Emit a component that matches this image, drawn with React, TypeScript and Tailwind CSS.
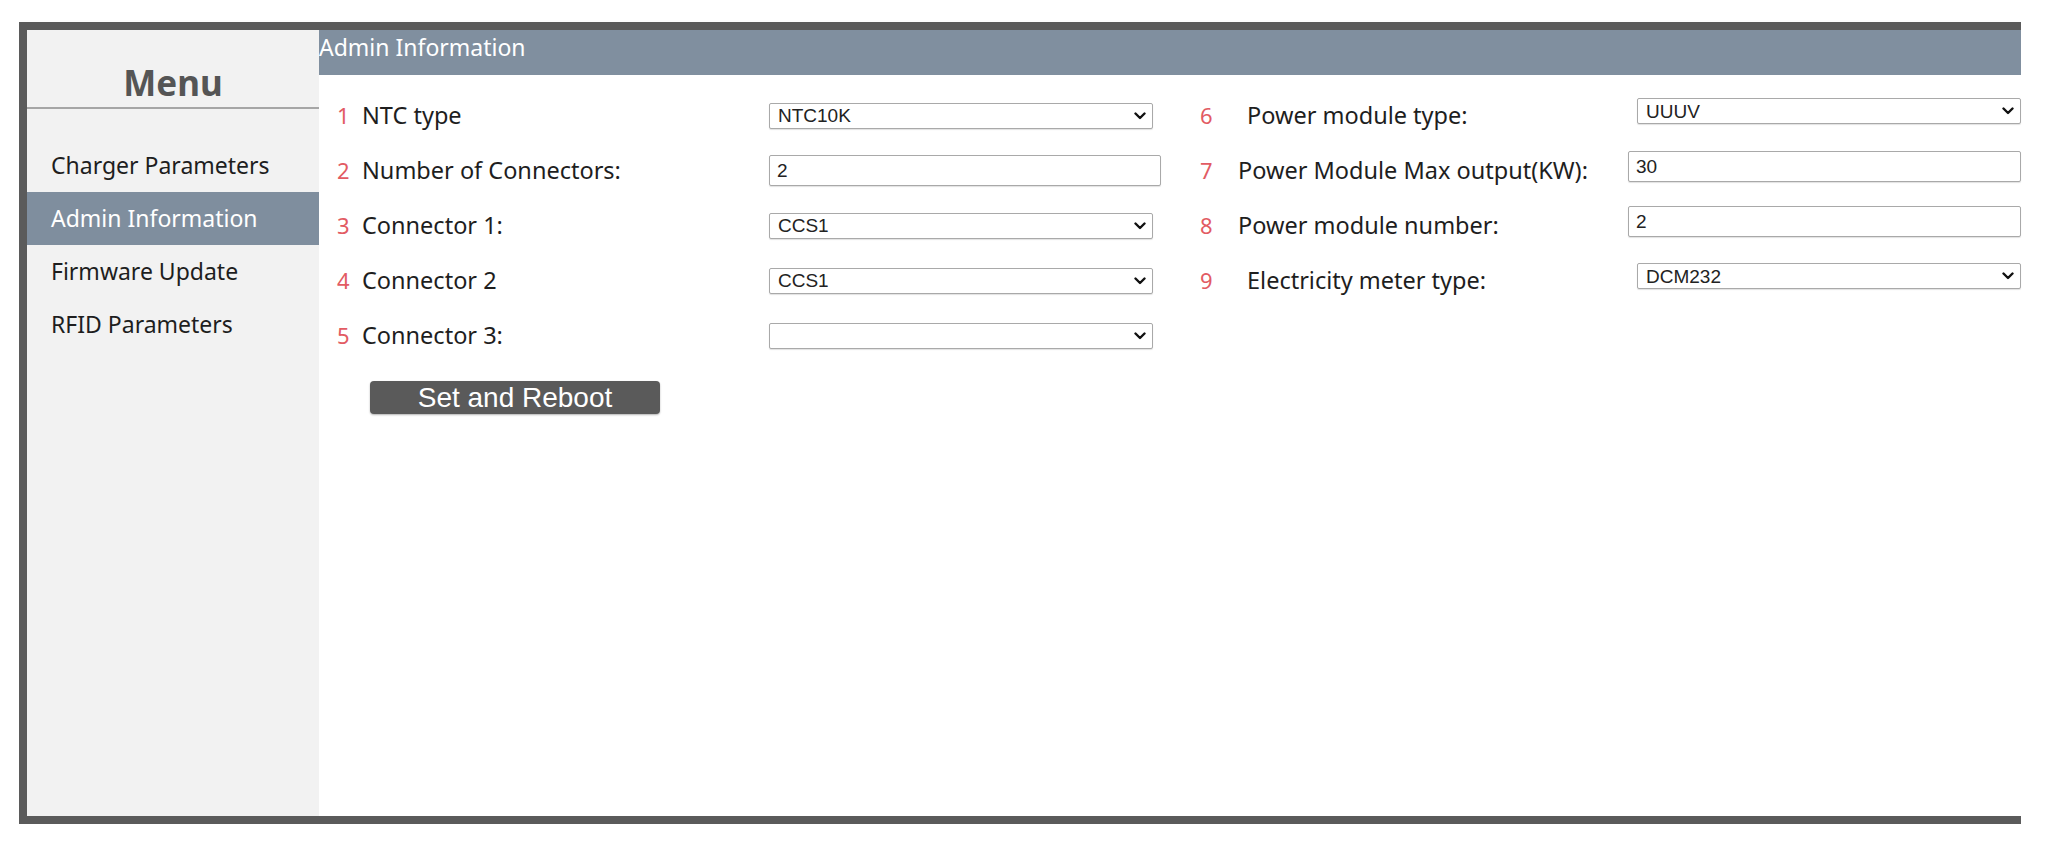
import React from 'react';

const sans = "font-['Noto_Sans',sans-serif]";
const arial = "font-['Liberation_Sans',Arial,sans-serif]";

const menuItems = ['Charger Parameters', 'Admin Information', 'Firmware Update', 'RFID Parameters'];

function Chevron() {
  return (
    <svg className="pointer-events-none absolute right-[7px] top-1/2 -translate-y-1/2" width="12" height="8" viewBox="0 0 12 8">
      <polyline points="1.5,1.5 6,6 10.5,1.5" fill="none" stroke="#111" strokeWidth="2.4" strokeLinecap="round" strokeLinejoin="round" />
    </svg>
  );
}

function Select({ value, className = '' }: { value: string; className?: string }) {
  return (
    <div className={`relative h-[26px] w-[384px] ${className}`}>
      <select
        defaultValue={value}
        className={`h-full w-full appearance-none rounded-[2px] border border-[#a9a9a9] bg-white pl-[8px] text-[19px] leading-none text-[#222] shadow-[0_1px_1px_rgba(0,0,0,0.12)] outline-none ${arial}`}
      >
        <option value={value}>{value}</option>
      </select>
      <Chevron />
    </div>
  );
}

function Input({ value, className = '' }: { value: string; className?: string }) {
  return (
    <input
      defaultValue={value}
      className={`h-[31px] w-[392px] rounded-[2px] border border-[#a9a9a9] bg-white pl-[7px] text-[19px] text-[#222] shadow-[0_1px_1px_rgba(0,0,0,0.12)] outline-none ${arial} ${className}`}
    />
  );
}

function Num({ n, className = '' }: { n: number; className?: string }) {
  return <span className={`text-[22px] text-[#e25b63] ${className}`}>{n}</span>;
}

const label = 'text-[23.5px] text-[#1e1e1e]';

export default function App() {
  return (
    <div className={`h-[845px] w-[2048px] bg-white pl-[19px] pt-[22px] ${sans}`}>
      <div className="flex h-[802px] w-[2002px] border-b-8 border-l-8 border-t-8 border-[#5b5b5b]">
        {/* Sidebar */}
        <aside className="flex w-[292px] flex-col bg-[#f2f2f2]">
          <div className="h-[79px] border-b-2 border-[#a6a6a6] pt-[33px] text-center">
            <span className="text-[35px] font-bold leading-[40px] text-[#555]">Menu</span>
          </div>
          <nav className="mt-[30px] flex flex-col">
            {menuItems.map((item) => (
              <div
                key={item}
                className={`flex h-[53px] items-center pl-[24px] text-[23px] ${
                  item === 'Admin Information' ? 'bg-[#7f8e9e] text-white' : 'text-[#1e1e1e]'
                }`}
              >
                {item}
              </div>
            ))}
          </nav>
        </aside>

        {/* Content */}
        <main className="flex flex-1 flex-col bg-white">
          <div className="h-[45px] bg-[#808f9f] text-[23px] leading-[34px] text-white">Admin Information</div>

          <div className="flex pt-[13px]">
            {/* Left column */}
            <div className="flex w-[881px] flex-col">
              <div className="flex h-[55px] items-center pl-[18px]">
                <Num n={1} className="w-[25px]" />
                <span className={`w-[407px] ${label}`}>NTC type</span>
                <Select value="NTC10K" />
              </div>
              <div className="flex h-[55px] items-center pl-[18px]">
                <Num n={2} className="w-[25px]" />
                <span className={`w-[407px] ${label}`}>Number of Connectors:</span>
                <Input value="2" />
              </div>
              <div className="flex h-[55px] items-center pl-[18px]">
                <Num n={3} className="w-[25px]" />
                <span className={`w-[407px] ${label}`}>Connector 1:</span>
                <Select value="CCS1" />
              </div>
              <div className="flex h-[55px] items-center pl-[18px]">
                <Num n={4} className="w-[25px]" />
                <span className={`w-[407px] ${label}`}>Connector 2</span>
                <Select value="CCS1" />
              </div>
              <div className="flex h-[55px] items-center pl-[18px]">
                <Num n={5} className="w-[25px]" />
                <span className={`w-[407px] ${label}`}>Connector 3:</span>
                <Select value="" />
              </div>

              <button
                className={`ml-[51px] mt-[18px] h-[33px] w-[290px] rounded-[4px] bg-[#5a5a5a] text-[28px] leading-[33px] text-white shadow-[0_1px_2px_rgba(0,0,0,0.3)] ${arial}`}
              >
                Set and Reboot
              </button>
            </div>

            {/* Right column */}
            <div className="flex flex-1 flex-col">
              <div className="flex h-[55px] items-center">
                <Num n={6} className="w-[47px]" />
                <span className={`w-[390px] ${label}`}>Power module type:</span>
                <Select value="UUUV" className="mb-[9px]" />
              </div>
              <div className="flex h-[55px] items-center">
                <Num n={7} className="w-[38px]" />
                <span className={`w-[390px] ${label}`}>Power Module Max output(KW):</span>
                <Input value="30" className="mb-[8px] w-[393px]" />
              </div>
              <div className="flex h-[55px] items-center">
                <Num n={8} className="w-[38px]" />
                <span className={`w-[390px] ${label}`}>Power module number:</span>
                <Input value="2" className="mb-[8px] w-[393px]" />
              </div>
              <div className="flex h-[55px] items-center">
                <Num n={9} className="w-[47px]" />
                <span className={`w-[390px] ${label}`}>Electricity meter type:</span>
                <Select value="DCM232" className="mb-[9px]" />
              </div>
            </div>
          </div>
        </main>
      </div>
    </div>
  );
}
